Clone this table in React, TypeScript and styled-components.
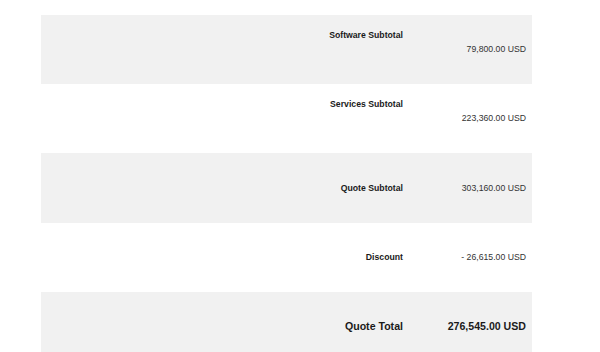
import styled, { createGlobalStyle } from "styled-components";

type Line = {
  label: string;
  value: string;
  topLabel?: boolean;
  total?: boolean;
};

const lines: Line[] = [
  { label: "Software Subtotal", value: "79,800.00 USD", topLabel: true },
  { label: "Services Subtotal", value: "223,360.00 USD", topLabel: true },
  { label: "Quote Subtotal", value: "303,160.00 USD" },
  { label: "Discount", value: "- 26,615.00 USD" },
  { label: "Quote Total", value: "276,545.00 USD", total: true },
];

const App = () => {
  return (
    <>
      <GlobalStyle />
      <Page>
        <Summary>
          {lines.map((line, i) => (
            <Row key={line.label} $shaded={i % 2 === 0}>
              <Label $top={!!line.topLabel} $total={!!line.total}>
                {line.label}
              </Label>
              <Value $total={!!line.total}>{line.value}</Value>
            </Row>
          ))}
        </Summary>
      </Page>
    </>
  );
};

const GlobalStyle = createGlobalStyle`
  html, body {
    margin: 0;
    padding: 0;
    background: #fff;
  }
  body {
    font-family: "Liberation Sans", Arial, sans-serif;
  }
`;

const Page = styled.div`
  width: 600px;
  height: 352px;
  overflow: hidden;
  padding: 15px 0 0 41px;
  box-sizing: border-box;
`;

const Summary = styled.div`
  width: 491px;
  display: flex;
  flex-direction: column;
`;

const Row = styled.div<{ $shaded: boolean }>`
  height: 69.2px;
  display: grid;
  grid-template-columns: 362px 1fr;
  background: ${(p) => (p.$shaded ? "#f1f1f1" : "#fff")};
`;

const Label = styled.div<{ $top: boolean; $total: boolean }>`
  text-align: right;
  font-weight: bold;
  color: #1a1a1a;
  font-size: ${(p) => (p.$total ? "10.6px" : "8.7px")};
  line-height: 1;
  align-self: ${(p) => (p.$top ? "start" : "center")};
  padding-top: ${(p) => (p.$top ? "15.5px" : "0")};
`;

const Value = styled.div<{ $total: boolean }>`
  text-align: right;
  padding-right: 6px;
  align-self: center;
  line-height: 1;
  font-size: ${(p) => (p.$total ? "10.6px" : "8.7px")};
  font-weight: ${(p) => (p.$total ? "bold" : "normal")};
  color: ${(p) => (p.$total ? "#1a1a1a" : "#333")};
`;

export default App;
